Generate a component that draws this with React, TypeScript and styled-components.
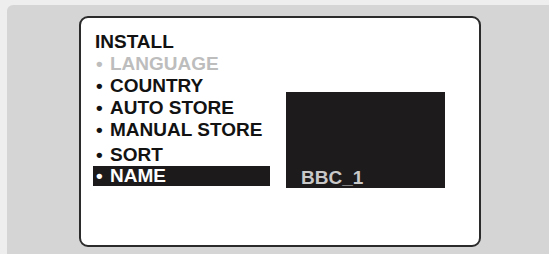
import React from 'react';
import styled, { createGlobalStyle } from 'styled-components';

const GlobalStyle = createGlobalStyle`
  html, body {
    margin: 0;
    padding: 0;
    background: #eeeeee;
  }
  body {
    width: 549px;
    height: 254px;
    overflow: hidden;
    font-family: 'Liberation Sans', Arial, sans-serif;
  }
`;

const items = [
  { label: 'LANGUAGE', disabled: true },
  { label: 'COUNTRY' },
  { label: 'AUTO STORE' },
  { label: 'MANUAL STORE' },
  { label: 'SORT', spaced: true },
  { label: 'NAME', selected: true },
];

const App: React.FC = () => {
  return (
    <>
      <GlobalStyle />
      <Backdrop>
        <Screen>
          <MenuColumn>
            <MenuTitle>INSTALL</MenuTitle>
            {items.map(item => (
              <MenuItem
                key={item.label}
                $disabled={item.disabled}
                $selected={item.selected}
                $spaced={item.spaced}
              >
                <Bullet>•</Bullet>
                {item.label}
              </MenuItem>
            ))}
          </MenuColumn>
          <Preview>
            <PreviewLabel>BBC_1</PreviewLabel>
          </Preview>
        </Screen>
      </Backdrop>
    </>
  );
};

const Backdrop = styled.div`
  margin: 5px 0 0 7px;
  height: 249px;
  background: #d5d5d5;
  border-top-left-radius: 6px;
  padding: 11px 0 0 72px;
  box-sizing: border-box;
`;

const Screen = styled.div`
  width: 402px;
  height: 231px;
  box-sizing: border-box;
  background: #ffffff;
  border: 2px solid #2b2b2b;
  border-radius: 9px;
  padding: 13px 0 0 12px;
  display: flex;
  align-items: flex-start;
  gap: 16px;
`;

const MenuColumn = styled.div`
  width: 177px;
  display: flex;
  flex-direction: column;
  font-size: 19px;
  font-weight: bold;
`;

const MenuTitle = styled.div`
  line-height: 22px;
  padding-left: 2px;
  color: #121212;
`;

const MenuItem = styled.div<{ $disabled?: boolean; $selected?: boolean; $spaced?: boolean }>`
  display: flex;
  line-height: ${p => (p.$selected ? '20px' : '22px')};
  margin-top: ${p => (p.$spaced ? '3px' : '0')};
  padding-left: 3px;
  white-space: nowrap;
  color: ${p => (p.$disabled ? '#bdbdbd' : p.$selected ? '#ffffff' : '#121212')};
  background: ${p => (p.$selected ? '#1d1a1b' : 'transparent')};
`;

const Bullet = styled.span`
  width: 14px;
  flex-shrink: 0;
`;

const Preview = styled.div`
  margin-top: 61px;
  width: 159px;
  height: 96px;
  background: #1e1b1c;
  display: flex;
  flex-direction: column;
  justify-content: flex-end;
  padding-left: 15px;
  box-sizing: border-box;
`;

const PreviewLabel = styled.div`
  font-size: 19px;
  font-weight: bold;
  line-height: 20px;
  color: #c9c9c9;
`;

export default App;
